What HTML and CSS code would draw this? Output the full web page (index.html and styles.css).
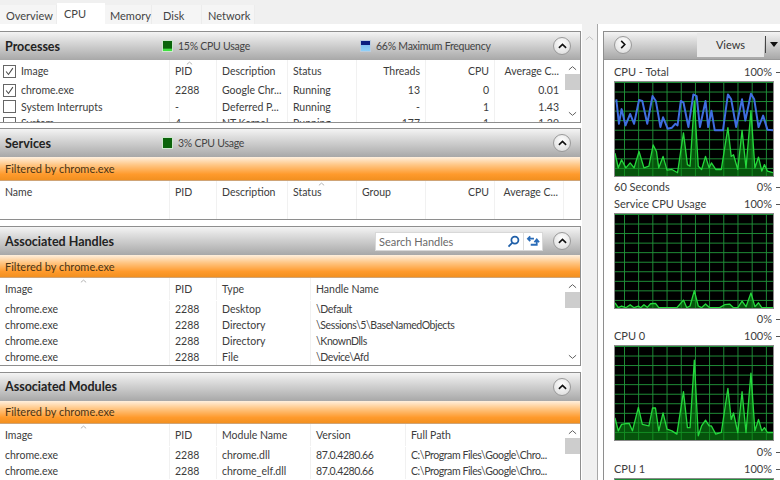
FILE: index.html
```html
<!DOCTYPE html>
<html lang="en">
<head>
<meta charset="utf-8">
<title>Resource Monitor</title>
<link rel="stylesheet" href="styles.css">
</head>
<body>
<div class="app">
  <nav class="tabs">
    <span class="tab tab-overview">Overview</span>
    <span class="tab tab-cpu">CPU</span>
    <span class="tab tab-memory">Memory</span>
    <span class="tab tab-disk">Disk</span>
    <span class="tab tab-network">Network</span>
  </nav>
  <div class="main">
    <div class="left">
      <section class="panel panel-processes">
        <header class="head">
          <h2 class="title">Processes</h2>
          <span class="metric metric-first"><i class="swatch swatch-green"></i>15% CPU Usage</span>
          <span class="metric metric-second"><i class="swatch swatch-blue"></i>66% Maximum Frequency</span>
          <button class="collapse"><svg viewBox="0 0 10 6" class="chev"><path d="M1 5 5 1.2 9 5"/></svg></button>
        </header>
        <div class="body">
          <div class="table">
            <div class="row row-head cols-proc">
              <span class="cell cell-check"><i class="check on"><svg viewBox="0 0 13 13"><path d="M2.5 6.5 5.3 10 10.5 2.5"/></svg></i>Image</span>
              <span class="cell sorted">PID<svg class="sort" viewBox="0 0 8 4"><path d="M1 3.5 4 1 7 3.5"/></svg></span><span class="cell">Description</span><span class="cell">Status</span><span class="cell num">Threads</span><span class="cell num">CPU</span><span class="cell num">Average C...</span>
            </div>
            <div class="row row-tall cols-proc">
              <span class="cell cell-check"><i class="check on"><svg viewBox="0 0 13 13"><path d="M2.5 6.5 5.3 10 10.5 2.5"/></svg></i>chrome.exe</span>
              <span class="cell">2288</span><span class="cell">Google Chr...</span><span class="cell">Running</span><span class="cell num">13</span><span class="cell num">0</span><span class="cell num">0.01</span>
            </div>
            <div class="row row-tall cols-proc">
              <span class="cell cell-check"><i class="check"></i>System Interrupts</span>
              <span class="cell">-</span><span class="cell">Deferred P...</span><span class="cell">Running</span><span class="cell num">-</span><span class="cell num">1</span><span class="cell num">1.43</span>
            </div>
            <div class="row row-tall cols-proc">
              <span class="cell cell-check"><i class="check"></i>System</span>
              <span class="cell">4</span><span class="cell">NT Kernel ...</span><span class="cell">Running</span><span class="cell num">177</span><span class="cell num">1</span><span class="cell num">1.29</span>
            </div>
          </div>
          <div class="scroll">
            <svg class="arrow" viewBox="0 0 10 6"><path d="M1 5 5 1.5 9 5"/></svg>
            <i class="thumb"></i>
            <svg class="arrow arrow-down" viewBox="0 0 10 6"><path d="M1 1 5 4.5 9 1"/></svg>
          </div>
        </div>
      </section>

      <section class="panel panel-services">
        <header class="head">
          <h2 class="title">Services</h2>
          <span class="metric metric-first"><i class="swatch swatch-dark"></i>3% CPU Usage</span>
          <button class="collapse"><svg viewBox="0 0 10 6" class="chev"><path d="M1 5 5 1.2 9 5"/></svg></button>
        </header>
        <div class="filter">Filtered by chrome.exe</div>
        <div class="body">
          <div class="table">
            <div class="row row-head row-fill cols-svc">
              <span class="cell">Name</span><span class="cell">PID</span><span class="cell">Description</span><span class="cell sorted">Status<svg class="sort" viewBox="0 0 8 4"><path d="M1 3.5 4 1 7 3.5"/></svg></span><span class="cell">Group</span><span class="cell num">CPU</span><span class="cell num">Average C...</span><span class="cell"></span>
            </div>
          </div>
        </div>
      </section>

      <section class="panel panel-handles">
        <header class="head">
          <h2 class="title">Associated Handles</h2>
          <div class="search">
            <span class="search-text">Search Handles</span>
            <svg class="search-icon" viewBox="0 0 14 14"><circle cx="8.5" cy="5.5" r="3.8"/><path d="M5.6 8.4 1.6 12.4"/></svg>
            <i class="search-sep"></i>
            <svg class="sync-icon" viewBox="0 0 16 14"><path d="M8.5 4H2M4.5 1.5 2 4 4.5 6.5"/><path d="M5 10.5H11.5V5.5M9 7.8 11.5 4.8 14 7.8"/></svg>
          </div>
          <button class="collapse collapse-search"><svg viewBox="0 0 10 6" class="chev"><path d="M1 5 5 1.2 9 5"/></svg></button>
        </header>
        <div class="filter">Filtered by chrome.exe</div>
        <div class="body">
          <div class="table">
            <div class="row row-head row-gap cols-hnd">
              <span class="cell sorted">Image<svg class="sort sort-image" viewBox="0 0 8 4"><path d="M1 3.5 4 1 7 3.5"/></svg></span><span class="cell">PID</span><span class="cell">Type</span><span class="cell">Handle Name</span>
            </div>
            <div class="row cols-hnd"><span class="cell">chrome.exe</span><span class="cell">2288</span><span class="cell">Desktop</span><span class="cell path">\Default</span></div>
            <div class="row cols-hnd"><span class="cell">chrome.exe</span><span class="cell">2288</span><span class="cell">Directory</span><span class="cell path">\Sessions\5\BaseNamedObjects</span></div>
            <div class="row cols-hnd"><span class="cell">chrome.exe</span><span class="cell">2288</span><span class="cell">Directory</span><span class="cell path">\KnownDlls</span></div>
            <div class="row cols-hnd"><span class="cell">chrome.exe</span><span class="cell">2288</span><span class="cell">File</span><span class="cell path">\Device\Afd</span></div>
          </div>
          <div class="scroll">
            <svg class="arrow" viewBox="0 0 10 6"><path d="M1 5 5 1.5 9 5"/></svg>
            <i class="thumb"></i>
            <svg class="arrow arrow-down" viewBox="0 0 10 6"><path d="M1 1 5 4.5 9 1"/></svg>
          </div>
        </div>
      </section>

      <section class="panel panel-modules">
        <header class="head">
          <h2 class="title">Associated Modules</h2>
          <button class="collapse"><svg viewBox="0 0 10 6" class="chev"><path d="M1 5 5 1.2 9 5"/></svg></button>
        </header>
        <div class="filter">Filtered by chrome.exe</div>
        <div class="body">
          <div class="table">
            <div class="row row-head row-gap cols-mod">
              <span class="cell sorted">Image<svg class="sort sort-image" viewBox="0 0 8 4"><path d="M1 3.5 4 1 7 3.5"/></svg></span><span class="cell">PID</span><span class="cell">Module Name</span><span class="cell">Version</span><span class="cell">Full Path</span>
            </div>
            <div class="row cols-mod"><span class="cell">chrome.exe</span><span class="cell">2288</span><span class="cell">chrome.dll</span><span class="cell path">87.0.4280.66</span><span class="cell path">C:\Program Files\Google\Chro...</span></div>
            <div class="row cols-mod"><span class="cell">chrome.exe</span><span class="cell">2288</span><span class="cell">chrome_elf.dll</span><span class="cell path">87.0.4280.66</span><span class="cell path">C:\Program Files\Google\Chro...</span></div>
          </div>
          <div class="scroll">
            <svg class="arrow" viewBox="0 0 10 6"><path d="M1 5 5 1.5 9 5"/></svg>
            <i class="thumb"></i>
          </div>
        </div>
      </section>
    </div>

    <div class="outer-scroll">
      <svg class="arrow" viewBox="0 0 10 6"><path d="M1 5 5 1.5 9 5"/></svg>
    </div>

    <aside class="right">
      <header class="right-head">
        <button class="collapse"><svg viewBox="0 0 6 10" class="chev-side"><path d="M1 1 5 5 1 9"/></svg></button>
        <div class="views">Views</div>
        <i class="views-sep"></i>
        <svg class="views-arrow" viewBox="0 0 10 6"><path d="M0 0H10L5 6Z"/></svg>
      </header>
      <div class="graphs">
        <div class="gblock">
          <div class="gline"><span>CPU - Total</span><span class="gval">100%</span></div>
          <div class="graph">
            <svg viewBox="72 182 480 288" preserveAspectRatio="none">
              <path class="g-fill" d="M72 470V400L82 445 92 420 105 445 118 430 130 445 145 395 160 445 175 440 188 375 198 395 205 445 218 410 230 452 245 450 262 460 280 338 292 435 300 440 313 240 325 440 335 450 347 410 358 445 365 430 378 450 395 450 415 322 425 410 432 405 445 450 458 330 470 445 485 270 497 445 508 412 518 455 526 435 535 455 552 460V470Z"/>
              <path class="g-line" d="M72 400 82 445 92 420 105 445 118 430 130 445 145 395 160 445 175 440 188 375 198 395 205 445 218 410 230 452 245 450 262 460 280 338 292 435 300 440 313 240 325 440 335 450 347 410 358 445 365 430 378 450 395 450 415 322 425 410 432 405 445 450 458 330 470 445 485 270 497 445 508 412 518 455 526 435 535 455 552 460"/>
              <path class="g-blue" d="M76 235 84 310 92 265 104 315 118 280 130 310 145 237 155 240 170 310 186 225 196 240 210 320 218 290 232 325 245 322 255 310 262 315 272 240 280 245 295 320 310 220 320 225 330 320 347 240 355 320 365 270 375 330 400 330 415 220 425 235 440 320 458 235 468 300 485 218 495 235 508 320 522 285 535 328 552 330"/>
            </svg>
          </div>
          <div class="gline gfoot"><span>60 Seconds</span><span class="gval">0%</span></div>
        </div>
        <div class="gblock">
          <div class="gline"><span>Service CPU Usage</span><span class="gval">100%</span></div>
          <div class="graph">
            <svg viewBox="72 70 480 286" preserveAspectRatio="none">
              <path class="g-fill" d="M72 356V340L82 355 92 350 105 355 118 346 130 355 143 350 150 355 160 346 170 354 180 343 195 342 205 355 260 355 280 332 290 355 300 350 313 303 325 350 335 355 347 344 358 354 390 355 405 346 420 344 432 355 445 355 458 335 470 352 485 310 497 352 508 340 518 355 552 355V356Z"/>
              <path class="g-line" d="M72 340 82 355 92 350 105 355 118 346 130 355 143 350 150 355 160 346 170 354 180 343 195 342 205 355 260 355 280 332 290 355 300 350 313 303 325 350 335 355 347 344 358 354 390 355 405 346 420 344 432 355 445 355 458 335 470 352 485 310 497 352 508 340 518 355 552 355"/>
            </svg>
          </div>
          <div class="gline gfoot"><span></span><span class="gval">0%</span></div>
        </div>
        <div class="gblock gblock-wide">
          <div class="gline"><span>CPU 0</span><span class="gval">100%</span></div>
          <div class="graph">
            <svg viewBox="72 45 480 288" preserveAspectRatio="none">
              <path class="g-fill" d="M72 333V265L82 305 92 285 105 283 115 282 125 305 143 233 155 285 175 290 186 235 195 235 205 305 218 250 230 300 245 305 260 315 280 185 292 295 300 295 313 88 325 320 335 290 347 272 358 290 365 290 378 315 395 310 415 175 425 270 432 250 445 310 458 185 470 310 485 128 497 305 508 270 518 305 526 295 535 310 552 310V333Z"/>
              <path class="g-line" d="M72 265 82 305 92 285 105 283 115 282 125 305 143 233 155 285 175 290 186 235 195 235 205 305 218 250 230 300 245 305 260 315 280 185 292 295 300 295 313 88 325 320 335 290 347 272 358 290 365 290 378 315 395 310 415 175 425 270 432 250 445 310 458 185 470 310 485 128 497 305 508 270 518 305 526 295 535 310 552 310"/>
            </svg>
          </div>
          <div class="gline gfoot"><span></span><span class="gval">0%</span></div>
        </div>
        <div class="gblock">
          <div class="gline"><span>CPU 1</span><span class="gval">100%</span></div>
          <div class="graph"></div>
        </div>
      </div>
    </aside>
  </div>
</div>
</body>
</html>
```
FILE: styles.css
```css
* { box-sizing: border-box; }
html, body { margin: 0; padding: 0; }
body {
  width: 780px;
  height: 480px;
  overflow: hidden;
  background: #fff;
  color: #3c3c3c;
  font: 10.5px/16px Lato, "Open Sans", sans-serif;
}
.app { display: flex; flex-direction: column; height: 480px; }

/* tabs */
.tabs {
  display: flex;
  height: 24px;
  padding-top: 5px;
  background: #f0f0f0;
  flex: none;
}
.tab {
  display: block;
  height: 19px;
  line-height: 21px;
  background: #f5f5f5;
  color: #444;
  font-size: 11px;
  border-right: 1px solid #ececec;
}
.tab-overview { width: 57px; padding-left: 6px; }
.tab-cpu { width: 48px; padding-left: 7px; margin-top: -2px; height: 21px; line-height: 21px; background: #fff; border-right: none; }
.tab-memory { width: 47px; padding-left: 5px; }
.tab-disk { width: 50px; padding-left: 11px; }
.tab-network { width: 53px; padding-left: 6px; }

.main { display: flex; flex: 1; min-height: 0; overflow: hidden; }

/* left column */
.left {
  width: 581px;
  flex: none;
  display: flex;
  flex-direction: column;
  padding-top: 7px;
  overflow: hidden;
}
.panel {
  flex: none;
  display: flex;
  flex-direction: column;
  border: 1px solid #8e8e8e;
  border-left: none;
  overflow: hidden;
  background: #fff;
}
.panel-processes { height: 92px; }
.panel-services { height: 92px; margin-top: 5px; }
.panel-handles { height: 140px; margin-top: 6px; }
.panel-modules { height: 120px; margin-top: 6px; flex: none; }

.head {
  flex: none;
  height: 28px;
  display: flex;
  align-items: center;
  padding-left: 5px;
  background: linear-gradient(#f4f4f4 0, #e0e0e0 25%, #a8a8a8 100%);
  position: relative;
}
.title {
  margin: 0;
  padding-top: 2px;
  font-size: 12.5px;
  font-weight: 700;
  color: #222;
  width: 157px;
  flex: none;
  white-space: nowrap;
}
.panel-modules .title { padding-top: 0; }
.metric {
  display: flex;
  align-items: center;
  gap: 5px;
  flex: none;
  font-size: 10.5px;
  letter-spacing: -.25px;
  color: #444;
}
.metric-first { width: 198px; }
.swatch { display: block; width: 11px; height: 12px; border: 1px solid #cfe8cf; }
.swatch-green { background: linear-gradient(#0a640a 70%, #3fe03f 85%); }
.swatch-dark { background: #0b640b; }
.swatch-blue { background: linear-gradient(#0a1f80 35%, #7fc0f0 40%, #8fd0f8); border-color: #bcd; }

.collapse {
  width: 18px;
  height: 18px;
  padding: 0;
  border: 1px solid #9a9a9a;
  border-radius: 50%;
  background: radial-gradient(circle at 50% 35%, #fff, #d8d8d8);
  display: flex;
  align-items: center;
  justify-content: center;
  margin-left: auto;
  margin-right: 9px;
  flex: none;
}
.chev { width: 9px; height: 6px; fill: none; stroke: #111; stroke-width: 1.8; }
.chev-side { width: 6px; height: 9px; fill: none; stroke: #111; stroke-width: 1.8; }

.filter {
  flex: none;
  height: 24px;
  line-height: 23px;
  padding-left: 5px;
  font-size: 11px;
  color: #4a3414;
  background: linear-gradient(#fff0de 0, #ffc684 35%, #ff9a2c 75%, #f29020 100%);
  border-bottom: 1px solid #cfa477;
}
.panel-handles .filter { height: 23px; line-height: 24px; }
.panel-modules .filter { height: 23px; line-height: 22px; }

.body { flex: 1; min-height: 0; display: flex; overflow: hidden; }
.table { flex: 1; min-width: 0; display: flex; flex-direction: column; overflow: hidden; }
.row { display: grid; height: 16px; flex: none; line-height: 16px; }
.row-head { height: 22px; line-height: 22px; }
.row-gap { margin-bottom: 1px; }
.row-tall { height: 16.5px; }
.row-fill { flex: 1; height: auto; }
.cols-proc { grid-template-columns: 169px 47px 71px 69px 69px 69px 1fr; }
.cols-svc { grid-template-columns: 169px 47px 71px 69px 69px 69px 69px 1fr; }
.cols-hnd { grid-template-columns: 169px 47px 94px 1fr; }
.cols-mod { grid-template-columns: 169px 47px 94px 95px 1fr; }
.cell {
  display: block;
  padding-left: 5px;
  border-left: 1px solid #f1f1f1;
  white-space: nowrap;
  overflow: hidden;
  position: relative;
}
.cell:first-child { border-left: none; padding-left: 5px; }
.path { letter-spacing: -.4px; }
.row-fill .cell { min-height: 38px; }
.num { text-align: right; padding-left: 0; padding-right: 5px; }
.cell.cell-check { display: flex; align-items: center; gap: 5px; padding-left: 3px; }
.check {
  display: block;
  width: 13px;
  height: 13px;
  border: 1px solid #666;
  background: #fff;
  flex: none;
}
.check svg { display: block; width: 11px; height: 11px; fill: none; stroke: #444; stroke-width: 1.2; }
.sorted { overflow: visible; }
.sort { position: absolute; top: 1px; left: 16px; width: 7px; height: 4px; fill: none; stroke: #aaa; stroke-width: 1; }
.cols-svc .sort { left: 30px; }
.sort-image { left: 80px; }

.scroll {
  flex: none;
  width: 16px;
  display: flex;
  flex-direction: column;
  align-items: center;
  position: relative;
  padding-top: 5px;
}
.arrow { width: 9px; height: 6px; fill: none; stroke: #606060; stroke-width: 1.1; flex: none; }
.arrow-down { margin-top: auto; margin-bottom: 5px; }
.thumb { display: block; width: 15px; height: 16px; margin-top: 3px; background: #cdcdcd; flex: none; }

/* search */
.search {
  position: absolute;
  left: 375px;
  top: 5px;
  width: 168px;
  height: 19px;
  display: flex;
  align-items: center;
  background: #fff;
  padding-left: 3px;
  border: 1px solid #d8d8d8;
}
.search-text { color: #6a6a6a; font-size: 11px; flex: 1; }
.search-icon { width: 13px; height: 13px; fill: none; stroke: #1f5fa8; stroke-width: 1.9; }
.search-sep { display: block; width: 1px; height: 17px; background: #ddd; margin: 0 2px 0 3px; }
.sync-icon { width: 15px; height: 13px; margin-right: 1px; fill: none; stroke: #2a6cb8; stroke-width: 1.9; }

/* outer scroll */
.outer-scroll {
  width: 16px;
  margin-left: 1px;
  flex: none;
  background: #f0f0f0;
  border-right: 1px solid #a8a8a8;
  display: flex;
  justify-content: center;
  padding-top: 11px;
}
.outer-scroll .arrow { stroke: #c4c4c4; }

/* right panel */
.right {
  margin-left: 5px;
  margin-top: 7px;
  flex: 1;
  min-width: 0;
  border-left: 1px solid #8e8e8e;
  border-top: 1px solid #8e8e8e;
  display: flex;
  flex-direction: column;
  overflow: hidden;
}
.right-head {
  flex: none;
  height: 28px;
  display: flex;
  align-items: center;
  padding-left: 10px;
  background: linear-gradient(#f4f4f4 0, #e0e0e0 25%, #a8a8a8 100%);
  border-bottom: 1px solid #999;
}
.right-head .collapse { margin: 0 0 2px 0; }
.views {
  width: 67px;
  height: 24px;
  margin-left: 65px;
  margin-bottom: 2px;
  line-height: 24px;
  text-align: center;
  font-size: 11px;
  background: #e9e9e9;
  color: #333;
  flex: none;
}
.views-sep { display: block; flex: none; width: 1px; height: 17px; background: #444; margin: 0 4px 2px 1px; }
.views-arrow { flex: none; width: 8px; height: 5px; fill: #111; margin-bottom: 2px; }

.graphs { flex: 1; min-height: 0; padding: 4px 0 0 10px; overflow: hidden; }
.gblock { margin-bottom: 1px; }
.gline {
  display: flex;
  justify-content: space-between;
  width: 158px;
  height: 16px;
  line-height: 16px;
  font-size: 11px;
  white-space: nowrap;
  position: relative;
}
.gval { position: relative; }
.gval::after {
  content: "";
  position: absolute;
  left: calc(100% + 4px);
  top: 8px;
  width: 4px;
  height: 1px;
  background: #555;
}
.gfoot { margin-top: 2px; }
.gblock-wide .gfoot { margin-top: 3px; }
.graph {
  width: 160px;
  height: 96px;
  margin-top: 1px;
  background-color: #000;
  background-image:
    linear-gradient(to right, #1f9038 1px, transparent 1px),
    linear-gradient(to bottom, #1f9038 1px, transparent 1px);
  background-size: 14.2px 9.55px;
  background-position: 9px 0;
  border: 1px solid #8a8a8a;
  overflow: hidden;
}
.graph svg { display: block; width: 100%; height: 100%; }
.g-fill { fill: rgba(10, 140, 20, .6); stroke: none; }
.g-line { fill: none; stroke: #25d83c; stroke-width: 4; stroke-linejoin: round; }
.g-blue { fill: none; stroke: #3f6ee0; stroke-width: 6; stroke-linejoin: round; }
```
